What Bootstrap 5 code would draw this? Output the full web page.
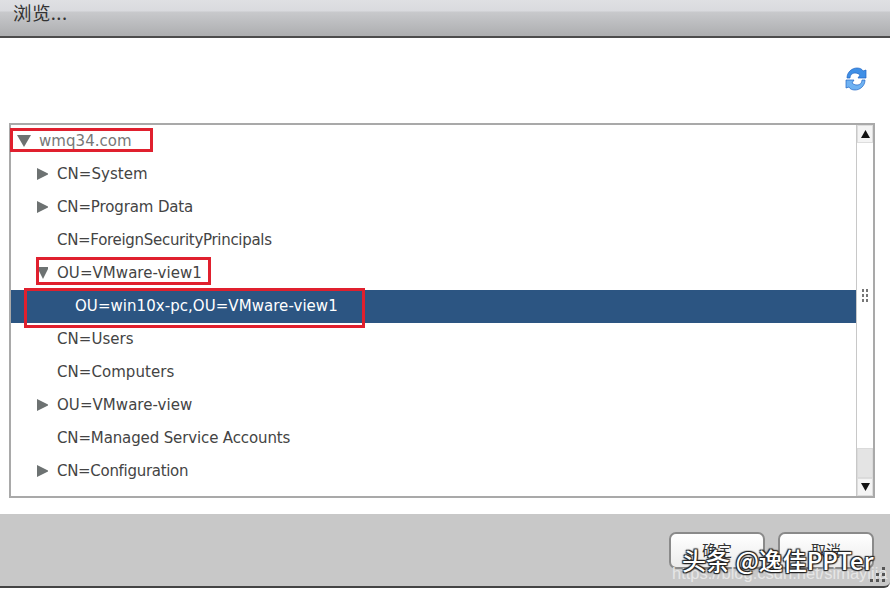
<!DOCTYPE html>
<html lang="zh">
<head>
<meta charset="utf-8">
<title>浏览</title>
<link href="https://cdn.jsdelivr.net/npm/bootstrap@5.3.0/dist/css/bootstrap.min.css" rel="stylesheet">
<style>
html,body{width:890px;height:589px;overflow:hidden;background:#fff;margin:0;}
body{position:relative;font-family:"DejaVu Sans","Noto Sans CJK SC",sans-serif;color:#444;}
.dlg-head{height:38px;background:linear-gradient(#dfe0e3 0,#d9dade 11px,#c8c9cc 12px,#aeafb1 35px);border-bottom:2px solid #4c4c4c;padding:0 0 12px 13px;font-size:18.500px;line-height:1;color:#333;font-family:"Noto Sans CJK SC",sans-serif;letter-spacing:.4px;}
.dlg-tools{height:85px;padding:29px 23px 0 0;}
.tree-box{margin:0 15px 0 9px;height:375px;border:2px solid #a9a9a9;}
.tree-list{padding-top:0;}
.tree-row{height:33px;font-size:15px;white-space:nowrap;color:#444;padding-left:46px;letter-spacing:.05px;}
.tree-row.lvl0{padding-left:27px;color:#777;}
.tree-row.lvl2{padding-left:64px;}
.tree-row.sel{background:#2c5582;color:#fff;}
.tight-a{letter-spacing:-.13px;}
.tight-b{letter-spacing:-.3px;}
.tw{width:11px;height:12px;flex:none;margin:-2px 9px 0 -20px;}
.lvl0 .tw{margin:-2px 8px 0 -21px;width:14px;}
.sbar{width:17px;background:#fff;border-left:1px solid #c8c8c8;}
.sb-btn{height:18px;background:#f4f4f4;border:1px solid #ddd;font-size:0;}
.sb-track{background:#fff;}
.sb-thumb{height:30px;background:#e4e4e4;border:1px solid #dadada;}
.grip{width:8px;height:14px;background-image:radial-gradient(#777 1.1px,transparent 1.5px);background-size:4px 5px;margin-top:145px;margin-left:4px;}
.dlg-foot{height:74px;margin-top:16px;background:#c8c8c8;border-bottom:2px solid #444;border-bottom-right-radius:6px;padding:18px 16px 0 0;gap:13px;}
.foot-btn{width:96px;height:37px;background:linear-gradient(#fff,#ececec);border:2px solid #8a8a8a;border-radius:7px;font-size:15px;color:#333;line-height:1;padding:8px 0 0;font-family:"Noto Sans CJK SC",sans-serif;text-align:center;}
.redbox{position:absolute;border:3px solid #e0202e;pointer-events:none;}
.rb1{left:10px;top:128px;width:143px;height:24px;}
.rb2{left:36px;top:257px;width:175px;height:28px;}
.rb3{left:24px;top:288px;width:341px;height:40px;}
.wm-main{position:absolute;left:682px;top:548px;font-size:24px;font-weight:500;line-height:1;color:#fff;font-family:"Noto Sans CJK SC",sans-serif;white-space:nowrap;text-shadow:0 0 2px #222,1px 1px 1px #222,-1px -1px 1px #222,1px -1px 1px #222,-1px 1px 1px #222;}
.wm-url{position:absolute;left:672px;top:565px;font-size:16.500px;line-height:1;color:#e6e6e6;font-family:"Liberation Sans",sans-serif;white-space:nowrap;}
.corner-grip{position:absolute;left:868px;top:564px;}
</style>
</head>
<body>
<div class="dlg-head d-flex align-items-center">浏览...</div>
<div class="dlg-tools d-flex justify-content-end align-items-start">
<svg width="22" height="24" viewBox="0 0 22 24" aria-label="刷新">
<path d="M2 11C2 5 7 1 12 1c3 0 5 1 6 3l3-1v8h-8l2-3c-1-1-3-2-5-2-3 0-5 2-5 5z" fill="#3f8fe6" stroke="#1f66c4" stroke-width=".7"/>
<path d="M20 13c0 6-5 10-10 10-3 0-5-1-6-3l-3 1v-8h8l-2 3c1 1 3 2 5 2 3 0 5-2 5-5z" fill="#6fb2f2" stroke="#1f66c4" stroke-width=".7"/>
</svg>
</div>
<div class="tree-box d-flex">
<div class="flex-grow-1 tree-list">
<div class="tree-row lvl0 d-flex align-items-center"><svg class="tw" viewBox="0 0 14 12"><path d="M0 0h14L7 12z" fill="#6d7272"/></svg>wmq34.com</div>
<div class="tree-row d-flex align-items-center"><svg class="tw" viewBox="0 0 11 12"><path d="M0 0l12 6-12 6z" fill="#6d7272"/></svg>CN=System</div>
<div class="tree-row tight-a d-flex align-items-center"><svg class="tw" viewBox="0 0 11 12"><path d="M0 0l12 6-12 6z" fill="#6d7272"/></svg>CN=Program Data</div>
<div class="tree-row tight-b d-flex align-items-center">CN=ForeignSecurityPrincipals</div>
<div class="tree-row d-flex align-items-center"><svg class="tw" viewBox="0 0 11 12"><path d="M0 0h12L6 12z" fill="#6d7272"/></svg>OU=VMware-view1</div>
<div class="tree-row lvl2 sel d-flex align-items-center">OU=win10x-pc,OU=VMware-view1</div>
<div class="tree-row d-flex align-items-center">CN=Users</div>
<div class="tree-row d-flex align-items-center">CN=Computers</div>
<div class="tree-row d-flex align-items-center"><svg class="tw" viewBox="0 0 11 12"><path d="M0 0l12 6-12 6z" fill="#6d7272"/></svg>OU=VMware-view</div>
<div class="tree-row tight-a d-flex align-items-center">CN=Managed Service Accounts</div>
<div class="tree-row tight-b d-flex align-items-center"><svg class="tw" viewBox="0 0 11 12"><path d="M0 0l12 6-12 6z" fill="#6d7272"/></svg>CN=Configuration</div>
</div>
<div class="sbar d-flex flex-column">
<div class="sb-btn d-flex align-items-center justify-content-center"><svg width="9" height="8" viewBox="0 0 9 8"><path d="M0 8h9L4.500 0z" fill="#111"/></svg></div>
<div class="sb-track flex-grow-1"><div class="grip"></div></div>
<div class="sb-thumb"></div>
<div class="sb-btn d-flex align-items-center justify-content-center"><svg width="9" height="8" viewBox="0 0 9 8"><path d="M0 0h9L4.500 8z" fill="#111"/></svg></div>
</div>
</div>
<div class="dlg-foot d-flex justify-content-end">
<div class="foot-btn">确定</div>
<div class="foot-btn">取消</div>
</div>
<div class="redbox rb1"></div>
<div class="redbox rb2"></div>
<div class="redbox rb3"></div>
<div class="wm-url">https://blog.csdn.net/simayijia</div>
<div class="wm-main">头条 @逸佳PPTer</div>
<svg class="corner-grip" width="20" height="20" viewBox="0 0 20 20"><path d="M14 3h3v3h-3zM14 9h3v3h-3zM8 9h3v3H8zM8 15h3v3H8zM2 15h3v3H2zM14 15h3v3h-3z" fill="#555"/></svg>
</body>
</html>
